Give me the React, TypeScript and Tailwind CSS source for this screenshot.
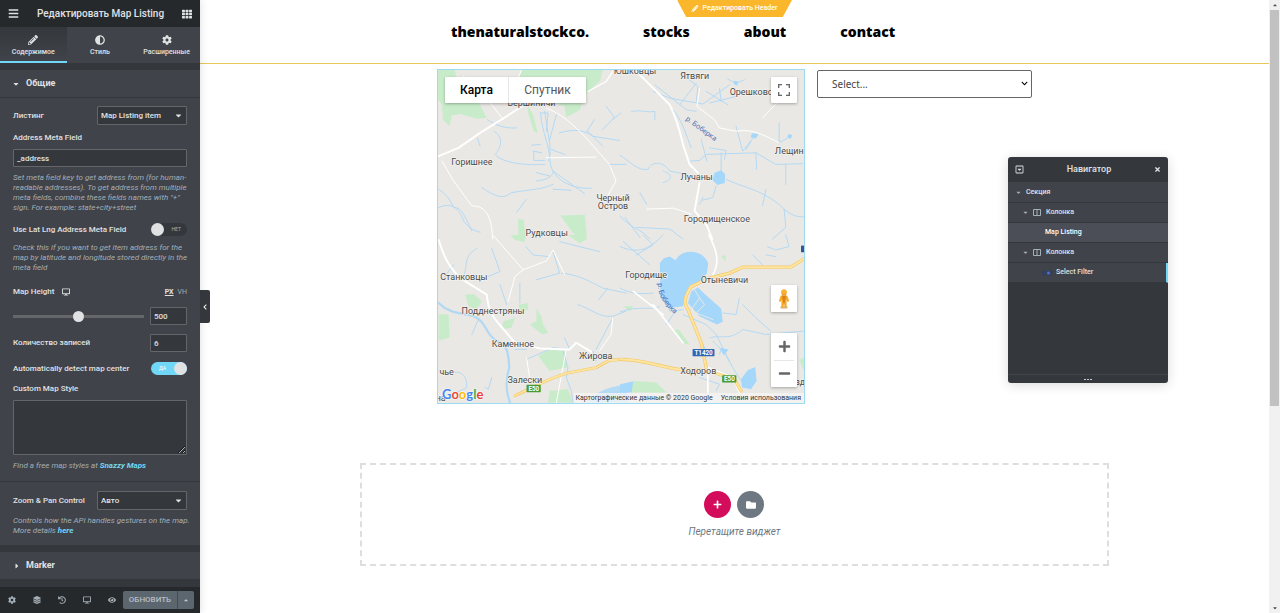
import React from "react";
import {
  FaBars, FaTh, FaPencilAlt, FaAdjust, FaCog, FaCaretDown, FaCaretRight, FaCaretUp,
  FaLayerGroup, FaHistory, FaDesktop, FaEye, FaChevronLeft, FaPlus, FaFolder, FaTimes, FaChevronDown, FaMinus, FaRegCaretSquareDown,
} from "react-icons/fa";

const label = "text-[8px] leading-[10px] text-[#e0e1e3] font-medium";
const field = "border border-[#64666a] bg-[#34383c] text-[#e0e1e3] text-[8px] font-medium outline-none rounded-[1px]";
const hint = "-mr-[6px] text-[8px] leading-[10px] italic text-[#a4afb7]";
const hintLink = "font-bold text-[#71d7f7]";

function Tab({ icon, text, active }: { icon: React.ReactNode; text: string; active?: boolean }) {
  return (
    <button
      className={
        "flex flex-1 flex-col items-center gap-[3px] border-b-2 pt-2 text-[10px] text-[#e0e1e3] " +
        (active ? "border-[#71d7f7] bg-linear-to-b from-[#34383c] to-[#404349]" : "border-[#404349] bg-[#404349]")
      }
    >
      {icon}
      <span className="text-[7px] leading-[9px] font-medium">{text}</span>
    </button>
  );
}

function PanelSelect({ id, value }: { id: string; value: string }) {
  return (
    <span className="relative flex w-[90px]">
      <select id={id} className={field + " h-[19px] w-full appearance-none px-[3px]"} defaultValue={value}>
        <option>{value}</option>
      </select>
      <FaCaretDown className="pointer-events-none absolute top-[5px] right-1 text-[9px] text-[#e0e1e3]" />
    </span>
  );
}

function Switch({ id, on }: { id: string; on?: boolean }) {
  return (
    <span className="relative h-[13px] w-[36px]">
      <input id={id} type="checkbox" role="switch" defaultChecked={on}
        className="absolute inset-0 m-0 h-full w-full cursor-pointer appearance-none rounded-full bg-[#34383c] checked:bg-[#71d7f7]" />
      <span className={"pointer-events-none absolute top-[3px] text-[5px] leading-[7px] " + (on ? "left-2 text-white" : "right-[6px] text-[#a4afb7]")}>
        {on ? "ДА" : "НЕТ"}
      </span>
      <span className={"pointer-events-none absolute top-0 h-[13px] w-[13px] rounded-full bg-[#e0e1e3] " + (on ? "right-0" : "left-0")} />
    </span>
  );
}

function Sidebar() {
  return (
    <aside className="relative z-10 flex w-[200px] shrink-0 flex-col bg-[#34383c] shadow-[0_0_8px_rgba(0,0,0,0.15)]">
      <header className="flex h-[27px] items-center justify-between bg-[#26292c] px-[8px] text-[#e0e1e3]">
        <button aria-label="Меню"><FaBars className="text-[11px]" /></button>
        <h1 className="text-[10px] font-medium">Редактировать Map Listing</h1>
        <button aria-label="Виджеты"><FaTh className="text-[10px]" /></button>
      </header>
      <nav className="flex h-[36px]">
        <Tab active icon={<FaPencilAlt />} text="Содержимое" />
        <Tab icon={<FaAdjust />} text="Стиль" />
        <Tab icon={<FaCog />} text="Расширенные" />
      </nav>

      <div className="mt-[7px] flex-1 overflow-hidden">
        <button className="flex h-[28px] w-full items-center border-b border-[#34383c] bg-[#404349] pl-[12px] text-[#e0e1e3]">
          <FaCaretDown className="mr-[6px] w-2 text-[8px]" />
          <span className="text-[9px] font-bold">Общие</span>
        </button>
        <div className="bg-[#404349] px-[13px] pt-[8px]">
          <div className="flex items-center justify-between">
            <label htmlFor="listing" className={label}>Листинг</label>
            <PanelSelect id="listing" value="Map Listing item" />
          </div>
          <label htmlFor="address" className={label + " mt-2 block"}>Address Meta Field</label>
          <input id="address" className={field + " mt-[6px] block h-[18px] w-full px-[3px]"} defaultValue="_address" />
          <p className={hint + " mt-[6px]"}>
            Set meta field key to get address from (for human-readable addresses). To get address from multiple meta fields, combine these fields names with "+" sign. For example: state+city+street
          </p>
          <div className="mt-[10px] flex items-center justify-between">
            <label htmlFor="latlng" className={label}>Use Lat Lng Address Meta Field</label>
            <Switch id="latlng" />
          </div>
          <p className={hint + " mt-[7px]"}>
            Check this if you want to get item address for the map by latitude and longitude stored directly in the meta field
          </p>
          <div className="mt-[14px] flex h-[10px] items-center">
            <label htmlFor="height" className={label}>Map Height</label>
            <FaDesktop className="ml-2 text-[8px] text-[#e0e1e3]" />
            <button className="ml-auto text-[7px] font-bold text-[#e0e1e3] underline">PX</button>
            <button className="ml-[4px] text-[7px] text-[#a4afb7]">VH</button>
          </div>
          <div className="mt-[10px] flex items-center justify-between">
            <input id="height" type="range" min={0} max={1000} defaultValue={500}
              className="h-[11px] w-[131px] appearance-none bg-[linear-gradient(#64666a,#64666a)] bg-[length:100%_3px] bg-center bg-no-repeat [&::-webkit-slider-thumb]:h-[11px] [&::-webkit-slider-thumb]:w-[11px] [&::-webkit-slider-thumb]:appearance-none [&::-webkit-slider-thumb]:rounded-full [&::-webkit-slider-thumb]:bg-[#e0e1e3]" />
            <input aria-label="Map Height" className={field + " h-[18px] w-[37px] px-[3px]"} defaultValue="500" />
          </div>
          <div className="mt-[9px] flex items-center justify-between">
            <label htmlFor="count" className={label}>Количество записей</label>
            <input id="count" className={field + " h-[18px] w-[37px] px-[3px]"} defaultValue="6" />
          </div>
          <div className="mt-[10px] flex items-center justify-between">
            <label htmlFor="center" className={label}>Automatically detect map center</label>
            <Switch id="center" on />
          </div>
          <label htmlFor="style" className={label + " mt-[9px] block"}>Custom Map Style</label>
          <textarea id="style" className={field + " mt-[6px] block h-[55px] w-full resize-y"} />
          <p className={hint + " mt-[6px]"}>
            Find a free map styles at <a href="#snazzy" className={hintLink}>Snazzy Maps</a>
          </p>
          <div className="-mx-[13px] mt-[10px] border-t border-[#34383c] px-[13px] pt-[9px] pb-[9px]">
            <div className="flex items-center justify-between">
              <label htmlFor="zoom" className={label}>Zoom &amp; Pan Control</label>
              <PanelSelect id="zoom" value="Авто" />
            </div>
            <p className={hint + " mt-[6px]"}>
              Controls how the API handles gestures on the map. More details <a href="#here" className={hintLink}>here</a>
            </p>
          </div>
        </div>
        <button className="mt-[7px] flex h-[27px] w-full items-center bg-[#404349] pl-[13px] text-[#e0e1e3]">
          <FaCaretRight className="mr-[5px] w-2 text-[8px]" />
          <span className="text-[9px] font-bold">Marker</span>
        </button>
      </div>

      <footer className="flex h-[26px] items-center bg-[#26292c] pr-[6px] pl-[8px] text-[8px] text-[#a4afb7]">
        <div className="flex flex-1 items-center justify-between pr-[7px]">
          <button aria-label="Настройки"><FaCog /></button>
          <button aria-label="Навигатор"><FaLayerGroup /></button>
          <button aria-label="История"><FaHistory /></button>
          <button aria-label="Адаптивный режим"><FaDesktop /></button>
          <button aria-label="Просмотр"><FaEye /></button>
        </div>
        <button className="h-[18px] w-[54px] rounded-l-[2px] bg-[#5b666f] text-[8px] font-medium text-[#b5bec5]">ОБНОВИТЬ</button>
        <button aria-label="Параметры сохранения" className="flex h-[18px] w-[17px] items-center justify-center rounded-r-[2px] border-l border-[#404b53] bg-[#5b666f] text-[#c2cbd2]">
          <FaCaretUp className="text-[6px]" />
        </button>
      </footer>

      <button aria-label="Свернуть панель" className="absolute top-[290px] left-full flex h-[33px] w-[10px] items-center justify-center rounded-r-[2px] bg-[#34383c] text-white">
        <FaChevronLeft className="text-[6px]" />
      </button>
    </aside>
  );
}

const places: [string, number, number][] = [
  ["Юшковцы", 594, 13], ["Ятвяги", 774, 26], ["Орешково", 945, 76], ["Вершиничи", 282, 108],
  ["Горишнее", 102, 286], ["Лещины", 1070, 254], ["Лучаны", 780, 331], ["Черный", 528, 394],
  ["Остров", 528, 420], ["Городищенское", 841, 460], ["Рудковцы", 328, 501], ["Станковцы", 78, 634],
  ["Городище", 628, 629], ["Отыневичи", 864, 643], ["Подднестряны", 166, 735], ["Каменное", 226, 836],
  ["Жирова", 476, 873], ["Залески", 262, 943], ["Ходоров", 785, 918], ["чье", 26, 921], ["на", 8, 1000], ["вд", 1092, 950],
];

function MapDrawing() {
  return (
    <svg viewBox="0 0 1104 1005" preserveAspectRatio="xMidYMid slice" className="block h-full w-full" fontFamily="Roboto, sans-serif" fill="none" strokeLinecap="round" strokeLinejoin="round">
      <rect width="1104" height="1005" fill="#eae8e4" />
      {/* north-west */}
      <g transform="translate(-3 -15)">
        <g fill="#c8ecca">
          <path d="M0 10H52L60 40 125 110 150 160 120 162 70 148 45 152 38 185 18 165 15 120 0 100Z" />
          <path d="M255 15H500L492 48 440 95 432 135 390 158 385 125 300 95 245 40Z" />
          <path d="M272 120 290 150 304 205 292 200 276 150Z" />
          <path d="M372 454 446 452 452 525H425L398 490Z" /><path d="M244 464 262 468 268 525H246Z" />
        </g>
        <g stroke="#b2d9f4" strokeWidth="3">
          <path d="M152 165C180 185 210 192 240 190M172 200C205 220 190 255 175 270 190 290 250 305 325 300M122 220 130 245M5 375C30 390 40 410 50 430 75 430 80 450 105 500M5 430C50 410 70 440 80 470 100 500 120 500 130 505M135 370C180 400 200 405 225 385 290 375 320 375 350 360M240 445 270 405" />
          <path d="M312 145C318 210 340 240 342 300 352 340 395 375 465 372M325 140C335 220 350 260 335 290M360 150 340 225M312 145H335L330 200M285 242 312 240M290 260 316 265M292 260V288H325M300 325 340 335M300 350C345 345 350 330 350 320L445 388M350 375 405 378" />
          <path d="M368 205C420 190 450 200 470 215L550 228M452 200 475 165M530 165 555 145M455 200 500 245M500 195 535 158 510 125M345 255 385 270M520 300H570" />
        </g>
        <g stroke="#fff">
          <path d="M5 275 65 250 130 205 210 155 260 122" strokeWidth="6" />
          <path d="M245 40 255 15M80 35 130 75 200 165M330 130C380 150 410 180 450 220L520 300 540 350 512 400M15 290 50 350 105 425C150 425 165 460 168 525M330 280 480 278" strokeWidth="3" />
          <path d="M455 80 510 50 530 20" strokeWidth="4" />
        </g>
      </g>
      {/* north-east */}
      <g transform="translate(549 -15)">
        <g stroke="#b2d9f4" strokeWidth="3">
          <path d="M35 140C75 135 80 145 105 140V165M100 80 150 100 250 118 330 60M160 135C190 170 200 215 215 250M180 120 230 55M270 115 350 95M260 80 325 120M190 30 235 65 230 110M105 60 200 135 230 140M300 70 305 110" />
          <path d="M325 43 350 55 375 45M245 225 262 290M210 290 240 288 260 270 410 265 470 300 550 298M270 250 320 258 315 285M305 265V325M320 345C370 370 430 375 490 430 510 450 530 460 555 458M430 425 440 375M495 435 500 490 460 525M350 185 370 260 410 210M380 255 395 230M410 265 412 315M480 175V235L515 215M500 300V360" />
          <path d="M0 272C30 290 50 320 85 315 95 290 130 290 150 320L200 330M130 355C160 345 160 330 130 320M290 365 280 400 250 408M240 420 250 400M0 455C40 500 60 490 90 525M15 460 60 520M50 490 150 495 190 525M60 385 80 420" />
        </g>
        <path d="m285 325 20-7 12 12-1 26-22 6-15-14ZM345 48l12 3-4 12-10-6ZM510 208l10 4-6 12-10-8ZM398 206l20 2-8 14-16-4Z" fill="#a5d7fb" />
        <g stroke="#fff">
          <path d="M60 30 150 120C175 170 185 220 190 240L210 300 235 325M240 355 225 440M225 440 262 485 278 525" strokeWidth="6" />
          <path d="M240 70 232 125 285 165 300 190 350 200C400 190 440 215 480 235M80 435 160 432 215 450M430 160 520 65" strokeWidth="3" />
        </g>
        <path id="boberka-north" d="M197 165 320 256" />
        <text fontSize="22" fill="#4b71b8"><textPath href="#boberka-north">р. Боберка</textPath></text>
      </g>
      {/* south-west */}
      <g transform="translate(-3 498)">
        <path fill="#c8ecca" d="M222 0H262L265 22 235 15ZM395 0H445L452 12 430 25ZM85 180 110 178 135 200 120 225 95 215ZM5 238 35 240 38 310 5 318ZM200 260 235 250 225 280 195 285ZM300 222 315 245 320 270 335 295 318 300 280 270 300 260ZM245 210 275 205 275 225 250 235ZM305 365 340 345 385 350 392 400 340 410ZM340 470 395 465 410 505H335Z" />
        <g stroke="#b2d9f4">
          <path d="M5 205C40 240 80 235 110 245 150 260 145 300 180 320 215 330 215 360 218 400 205 440 210 480 220 505" strokeWidth="7" />
          <path d="M268 35 290 60 335 65M350 50 370 115 300 135M375 115C430 120 460 140 500 160L570 175M515 160 488 195M425 210C470 225 490 250 530 245L570 230M530 250 480 345M370 20 490 50M120 40C70 70 100 100 75 130M165 40 190 110 155 125M190 150 210 210M250 145V205M125 255 105 300M270 375 350 340 400 345 385 310M380 350 395 400 390 430 405 470 410 505M480 380 470 350M25 420C80 400 90 430 90 460L60 475M165 430 155 465 145 460M50 90 20 130M0 490H110M270 345 235 345" strokeWidth="3" />
        </g>
        <g stroke="#fff">
          <path d="M5 15C20 60 30 90 70 130L150 180C155 240 180 260 210 295L235 325 310 342 400 345 420 325 465 352" strokeWidth="6" />
          <path d="M168 0 260 105 235 125 215 200M260 105 330 78 350 45 385 120M270 370 280 435M490 350 525 300 530 250M390 345 360 505" strokeWidth="3" />
        </g>
        <path d="M235 485C280 465 350 425 400 415L480 400 520 378 570 375" stroke="#f3c769" strokeWidth="9" />
        <path d="M235 485C280 465 350 425 400 415L480 400 520 378 570 375" stroke="#ffe6a0" strokeWidth="5" />
        <path d="M460 495C500 460 540 455 575 450V505H450Z" fill="#b5daf4" />
      </g>
      {/* south-east */}
      <g transform="translate(549 498)">
        <path d="M132 70 150 65 168 76C185 40 250 42 266 85L262 115 235 150 208 155 190 215 150 220 122 190 120 85ZM215 170 235 158 258 180 305 222 310 262 292 270 240 245 205 205ZM385 408 408 398 412 440 395 465 368 460 365 435ZM0 450 45 440 35 475 0 475Z" fill="#a5d7fb" />
        <path d="M215 225 240 190 255 210 230 235 280 255M240 190 225 165" stroke="#e9e7e3" strokeWidth="3" />
        <path d="M40 440 110 445 140 475H35ZM160 285 178 285 210 330 195 328ZM10 215 40 215 30 230ZM305 65 320 60 318 80ZM540 375 555 370V410Z" fill="#c8ecca" />
        <path stroke="#b2d9f4" strokeWidth="3" d="M0 35C60 60 90 40 130 0M50 60 100 30 70 0M10 20 90 90M0 160C30 175 50 180 100 175M0 232C60 210 100 230 120 215M130 160 150 230 190 225M160 240 140 270M270 310C310 300 330 320 370 285L440 300 555 290M280 320 305 345 300 360M360 190 350 240 310 235M370 210 410 250 455 290M445 35 470 45 510 35 500 0M440 60 470 65M310 345 340 400 365 440M190 240 260 270 290 300 330 380M240 430 300 450 290 470M230 290 260 350M400 60 430 90" />
        <path stroke="#fff" strokeWidth="5" d="M268 0C295 50 300 85 280 120M100 210 190 325M265 400V475M265 400 340 430 360 475M40 170 130 240" />
        <path stroke="#f3c769" strokeWidth="10" d="M555 72 515 97H370L330 115 270 130 215 155C195 185 190 205 205 225L245 325 260 400M0 375C80 375 140 405 200 408H262L345 435 365 470" />
        <path stroke="#ffe6a0" strokeWidth="6" d="M555 72 515 97H370L330 115 270 130 215 155C195 185 190 205 205 225L245 325 260 400M0 375C80 375 140 405 200 408H262L345 435 365 470" />
        <path d="m300 340 28 5-15 18Z" fill="#a5d7fb" />
        <path id="boberka-south" d="M114 145C116 185 125 205 190 260" />
        <text fontSize="22" fill="#4b71b8"><textPath href="#boberka-south">р. Боберка</textPath></text>
        <rect x="219" y="344" width="66" height="22" rx="2" fill="#2f66b5" />
        <text x="252" y="362" fontSize="19" fontWeight="700" fill="#fff" textAnchor="middle">T1420</text>
        <rect x="308" y="423" width="43" height="22" rx="2" fill="#4a9a37" />
        <text x="330" y="441" fontSize="19" fontWeight="700" fill="#fff" textAnchor="middle">E50</text>
        <rect x="546" y="32" width="14" height="20" fill="#2f5597" />
      </g>
      <rect x="267" y="950" width="43" height="22" rx="2" fill="#4a9a37" />
      <text x="289" y="968" fontSize="19" fontWeight="700" fill="#fff" textAnchor="middle">E50</text>
      <g fontSize="27" fill="#4a4a4a" stroke="#f4f3f0" strokeWidth="4" paintOrder="stroke" textAnchor="middle">
        {places.map(([name, x, y]) => <text key={name} x={x} y={y}>{name}</text>)}
      </g>
    </svg>
  );
}

const mapButton = "absolute right-[7px] flex w-[26px] items-center justify-center rounded-[1px] bg-white text-[#666] shadow-[0_1px_3px_rgba(0,0,0,0.3)]";

function MapWidget() {
  return (
    <div className="relative h-[335px] w-[368px] shrink-0 overflow-hidden border border-[#9cdcf0]">
      <MapDrawing />
      <div className="absolute top-[7px] left-[7px] flex h-[26px] rounded-[1px] bg-white text-[12px] shadow-[0_1px_3px_rgba(0,0,0,0.3)]">
        <button className="w-[64px] border-r border-[#e6e6e6] font-medium text-black">Карта</button>
        <button className="w-[77px] text-[#565656]">Спутник</button>
      </div>
      <button aria-label="Полный экран" className={mapButton + " top-[7px] h-[26px]"}>
        <svg viewBox="0 0 18 18" className="h-3 w-3" fill="#666"><path d="M0 0v6h2V2h4V0H0zM16 0h-4v2h4v4h2V0h-2zM16 16h-4v2h6v-6h-2v4zM2 12H0v6h6v-2H2v-4z" /></svg>
      </button>
      <button aria-label="Просмотр улиц" className={mapButton + " top-[215px] h-[27px]"}>
        <svg viewBox="0 0 36 62" className="h-[20px] w-[12px]">
          <ellipse cx="18" cy="57" rx="12" ry="4" fill="#d8c193" />
          <path d="M8 20h20l6 18-5 2-3-8v25h-6l-2-18-2 18h-6V32l-3 8-5-2z" fill="#f5a623" />
          <path d="M18 20h6l-4 22-2 8-2-8-4-22z" fill="#d98017" />
          <circle cx="18" cy="10" r="9" fill="#f9b233" /><path d="M10 14a9 9 0 0 0 16 0l-8 4z" fill="#d98017" />
        </svg>
      </button>
      <div className={mapButton + " top-[263px] h-[54px] flex-col"}>
        <button aria-label="Увеличить" className="flex w-[20px] flex-1 items-center justify-center border-b border-[#e6e6e6]"><FaPlus className="text-[13px]" /></button>
        <button aria-label="Уменьшить" className="flex w-[20px] flex-1 items-center justify-center"><FaMinus className="text-[13px]" /></button>
      </div>
      <a href="#google" aria-label="Google" className="absolute bottom-0 left-1 font-[Lato] text-[13px] leading-[18px] font-bold [text-shadow:0_0_2px_#fff,0_0_2px_#fff]">
        <span className="text-[#4285f4]">G</span><span className="text-[#ea4335]">o</span><span className="text-[#fbbc05]">o</span><span className="text-[#4285f4]">g</span><span className="text-[#34a853]">l</span><span className="text-[#ea4335]">e</span>
      </a>
      <div className="absolute right-0 bottom-0 flex h-[10px] items-center gap-[8px] bg-[#f5f5f5]/75 pr-[3px] pl-px text-[7px] leading-[10px] text-[#333]">
        <span>Картографические данные © 2020 Google</span>
        <a href="#terms">Условия использования</a>
      </div>
    </div>
  );
}

function TreeRow({ indent, text, caret, icon, selected, marked }: { indent: string; text: string; caret?: boolean; icon?: React.ReactNode; selected?: boolean; marked?: boolean }) {
  return (
    <button className={"flex h-[20px] w-full shrink-0 items-center border-b border-[#34383c] text-[7px] font-medium " + indent + (selected ? " bg-[#4b4e56] text-white" : " bg-[#404349] text-[#e0e1e3]") + (marked ? " border-r-2 border-r-[#71d7f7]" : "")}>
      {caret && <FaCaretDown className="mr-[4px] text-[7px] text-[#a4afb7]" />}
      {icon}
      {text}
    </button>
  );
}

function ColumnIcon() {
  return (
    <svg viewBox="0 0 8 7" className="mr-[5px] h-[7px] w-[8px]" fill="none" stroke="#a4afb7">
      <path d="M.5.5h7v6h-7zM4 .5v6" />
    </svg>
  );
}

function Navigator() {
  return (
    <section className="absolute top-[157px] right-[101px] flex h-[226px] w-[160px] flex-col overflow-hidden rounded-[3px] bg-[#34383c] shadow-[0_2px_12px_rgba(0,0,0,0.15)]">
      <header className="flex h-[25px] shrink-0 items-center justify-between px-[7px] text-[#e0e1e3]">
        <button aria-label="Развернуть всё"><FaRegCaretSquareDown className="text-[9px]" /></button>
        <h2 className="text-[9px] font-medium">Навигатор</h2>
        <button aria-label="Закрыть"><FaTimes className="text-[7px]" /></button>
      </header>
      <div className="border-t border-[#404349]">
        <TreeRow indent="pl-[7px]" text="Секция" caret />
        <TreeRow indent="pl-[14px]" text="Колонка" caret icon={<ColumnIcon />} />
        <TreeRow indent="pl-[37px]" text="Map Listing" selected />
        <TreeRow indent="pl-[14px]" text="Колонка" caret icon={<ColumnIcon />} />
        <TreeRow indent="pl-[33px]" text="Select Filter" marked icon={
          <svg viewBox="0 0 12 6" className="mr-[3px] h-[6px] w-[12px]"><rect x="0.5" y="0.5" width="11" height="5" rx="1" fill="#35405f" /><circle cx="7.500" cy="3" r="1.500" fill="#4d6fd0" /></svg>
        } />
      </div>
      <footer className="mt-auto flex h-[9px] items-center justify-center gap-px border-t border-[#404349]">
        <i className="h-px w-[2px] bg-[#c2cbd2]" /><i className="h-px w-[2px] bg-[#c2cbd2]" /><i className="h-px w-[2px] bg-[#c2cbd2]" />
      </footer>
    </section>
  );
}

export default function App() {
  return (
    <div className="flex h-screen w-full overflow-hidden bg-white font-[Roboto,sans-serif]">
      <Sidebar />
      <main className="relative min-w-0 flex-1">
        <header className="relative h-[64px] border-b border-b-[#e6c95c]">
          <button className="absolute top-0 left-1/2 flex h-[17px] w-[115px] -translate-x-1/2 items-center justify-center gap-1 bg-[#fbb72c] text-[7px] font-medium text-white [clip-path:polygon(0_0,100%_0,92%_100%,8%_100%)]">
            <FaPencilAlt className="text-[7px]" />
            Редактировать Header
          </button>
          <nav className="mx-auto flex w-[595px] gap-[54px] pt-[22px] pl-[14px] font-['Open_Sans',sans-serif] text-[14px] leading-[20px] font-extrabold text-black">
            <a href="#home">thenaturalstockco.</a>
            <a href="#stocks">stocks</a>
            <a href="#about">about</a>
            <a href="#contact">contact</a>
          </nav>
        </header>
        <div className="mx-auto mt-[5px] flex w-[595px] gap-[12px]">
          <MapWidget />
          <div className="relative mt-px flex-1 self-start">
            <select aria-label="Select" className="h-[28px] w-full appearance-none rounded-[2px] border border-[#666] bg-white pl-[14px] font-['Noto_Sans'] text-[10px] text-[#444]">
              <option>Select...</option>
            </select>
            <FaChevronDown className="pointer-events-none absolute top-[10px] right-1 text-[7px] text-black" />
          </div>
        </div>
        <section className="mx-auto mt-[59px] flex h-[103px] w-[70%] flex-col items-center border-2 border-dashed border-[#dcdee0] pt-[26px]">
          <div className="flex gap-[6px] text-white">
            <button aria-label="Добавить секцию" className="flex h-[27px] w-[27px] items-center justify-center rounded-full bg-[#d30c5c]"><FaPlus className="text-[9px]" /></button>
            <button aria-label="Добавить шаблон" className="flex h-[27px] w-[27px] items-center justify-center rounded-full bg-[#6d7882]"><FaFolder className="text-[10px]" /></button>
          </div>
          <p className="mt-[8px] text-[10px] leading-[12px] italic text-[#6d7882]">Перетащите виджет</p>
        </section>
        <Navigator />
      </main>
      <div aria-hidden="true" className="flex w-[11px] shrink-0 flex-col items-center justify-between bg-[#f1f1f1] py-[2px] text-[6px] text-[#505050]">
        <FaCaretUp />
        <div className="mt-[2px] mb-auto h-[65%] w-[9px] bg-[#c1c1c1]" />
        <FaCaretDown />
      </div>
    </div>
  );
}
